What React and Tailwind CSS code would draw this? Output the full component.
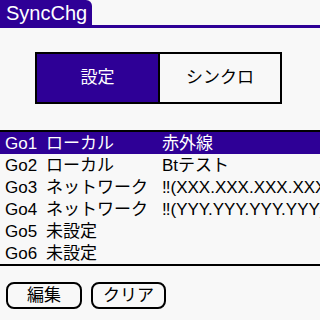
import React from 'react'

const PURPLE = 'bg-[#2e0096]'

const ROWS = [
  { id: 'Go1', kind: 'ローカル', target: '赤外線', selected: true },
  { id: 'Go2', kind: 'ローカル', target: 'Btテスト' },
  { id: 'Go3', kind: 'ネットワーク', target: '‼(XXX.XXX.XXX.XXX)' },
  { id: 'Go4', kind: 'ネットワーク', target: '‼(YYY.YYY.YYY.YYY)' },
  { id: 'Go5', kind: '未設定', target: '' },
  { id: 'Go6', kind: '未設定', target: '' },
]

export default function App() {
  return (
    <div
      className="w-[320px] h-[320px] bg-[#f8f8f8] flex flex-col overflow-hidden text-black"
      style={{ fontFamily: '"Liberation Sans", "Noto Sans CJK JP", sans-serif' }}
    >
      {/* title tab */}
      <div className={`w-[92px] h-[25px] ${PURPLE} rounded-tr-[6px] text-white text-[20px] leading-[27px] pl-[6px]`}>
        SyncChg
      </div>
      <div className={`h-[3px] ${PURPLE}`} />

      {/* push buttons */}
      <div className="mt-[24px] ml-[35px] w-[247px] h-[52px] border-2 border-black flex">
        <div className={`w-[123px] border-r-2 border-black ${PURPLE} text-white text-[17px] flex items-center justify-center`}>
          設定
        </div>
        <div className="flex-1 text-[17px] flex items-center justify-center">シンクロ</div>
      </div>

      {/* list */}
      <div className="mt-[26px] border-t-2 border-b-2 border-black">
        {ROWS.map(r => (
          <div
            key={r.id}
            className={`h-[22px] flex text-[17px] leading-[24px] whitespace-nowrap ${r.selected ? `${PURPLE} text-white` : ''}`}
          >
            <span className="w-[46px] pl-[5px] shrink-0">{r.id}</span>
            <span className="w-[116px] shrink-0">{r.kind}</span>
            <span className="flex-1 overflow-hidden">{r.target}</span>
          </div>
        ))}
      </div>

      {/* buttons */}
      <div className="mt-[16px] flex">
        <button className="ml-[6px] w-[76px] h-[27px] border-2 border-black rounded-[8px] text-[17px] leading-none flex items-center justify-center">
          編集
        </button>
        <button className="ml-[9px] w-[75px] h-[27px] border-2 border-black rounded-[8px] text-[17px] leading-none flex items-center justify-center">
          クリア
        </button>
      </div>
    </div>
  )
}
